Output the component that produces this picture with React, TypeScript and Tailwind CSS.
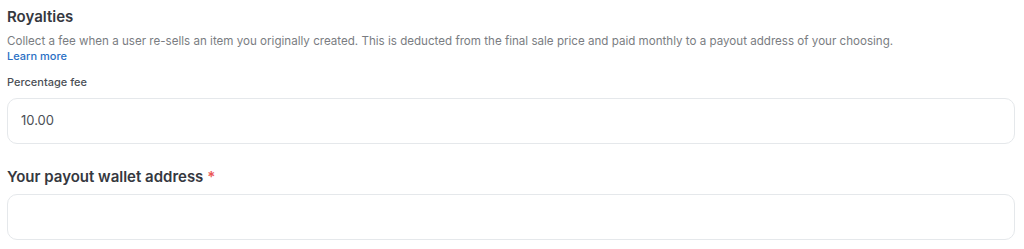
import React from 'react';

const App = () => {
  return (
    <div className="w-[1024px] h-[249px] bg-white pl-[7px] pr-[9px] pt-[8px] text-[#353840]" style={{ fontFamily: 'Inter, "Noto Sans", sans-serif' }}>
      <h2 className="text-[15px] font-semibold leading-[18px] text-[#353840]">Royalties</h2>
      <p className="mt-[8px] text-[11.6px] leading-[15px] text-[#7a7d82]">
        Collect a fee when a user re-sells an item you originally created. This is deducted from the final sale price and paid monthly to a payout address of your choosing.
      </p>
      <a href="#" className="block text-[11px] leading-[15px] font-medium text-[#2a6fc4]">
        Learn more
      </a>
      <label className="mt-[11px] block text-[11px] leading-[15px] font-medium text-[#4b4f56]">Percentage fee</label>
      <div className="mt-[8px] flex h-[46px] items-center rounded-[10px] border border-[#e5e8eb] px-[13px] text-[13px] text-[#4b4f56]">
        10.00
      </div>
      <div className="mt-[23px] text-[15px] font-semibold leading-[20px] text-[#353840]">
        Your payout wallet address <span className="text-[#eb5757]">*</span>
      </div>
      <div className="mt-[7px] h-[46px] rounded-[10px] border border-[#e5e8eb]" />
    </div>
  );
};

export default App;
